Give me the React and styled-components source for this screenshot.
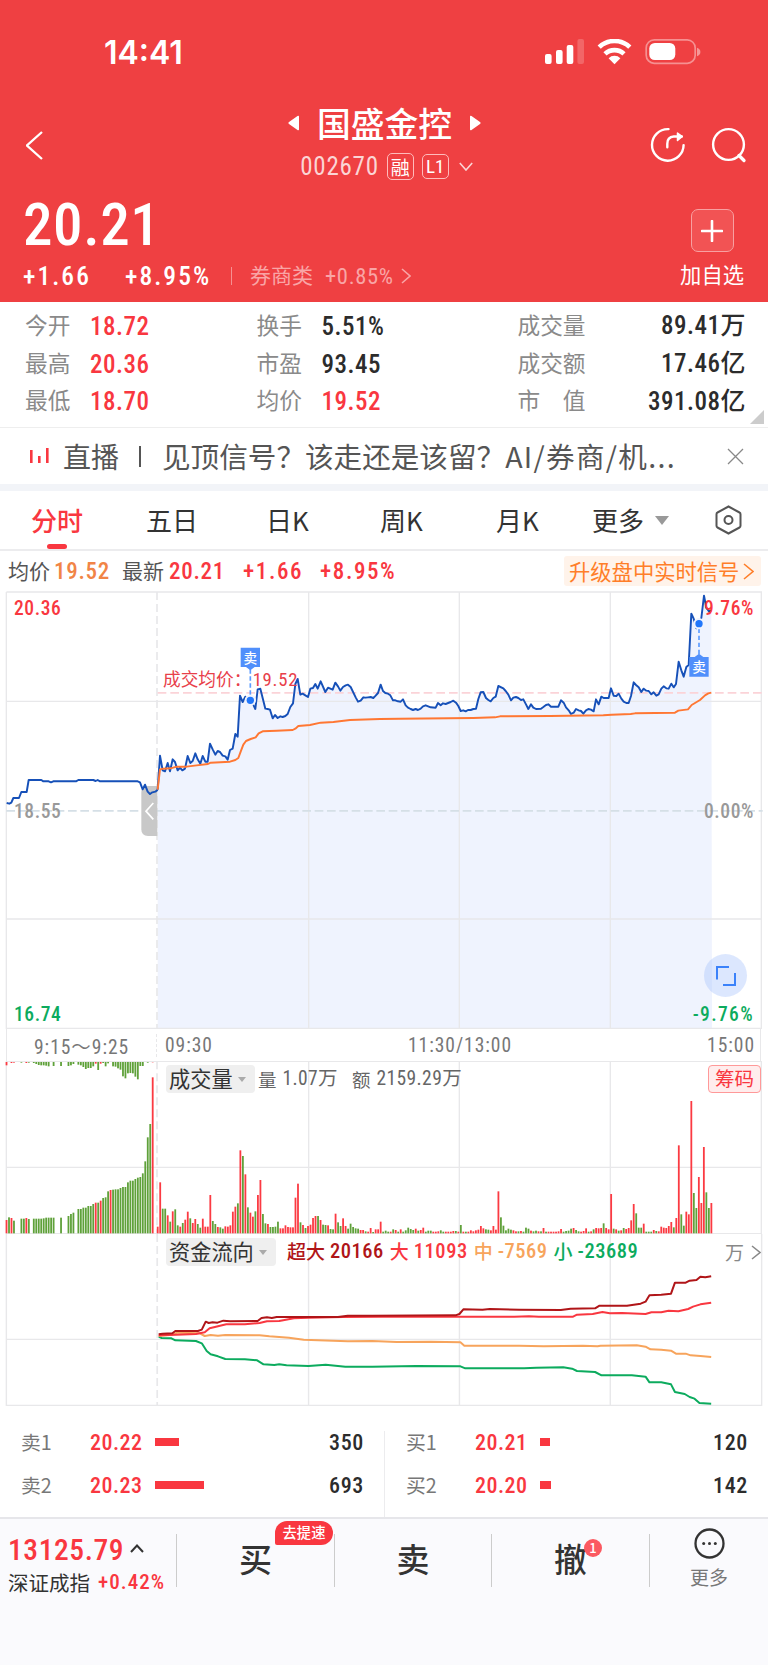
import styled, { createGlobalStyle } from "styled-components";

const GlobalStyle = createGlobalStyle`
  * {
    box-sizing: border-box;
  }

  body {
    margin: 0;
    background: #fff;
    color: #333;
    font-family: "Noto Sans CJK SC", sans-serif;
  }
`;

const RED = "#f93740";
const GREEN = "#0cab5e";
const ORANGE = "#f18446";

const STATS = [
  [
    { label: "今开", value: "18.72", up: true },
    { label: "最高", value: "20.36", up: true },
    { label: "最低", value: "18.70", up: true },
  ],
  [
    { label: "换手", value: "5.51%" },
    { label: "市盈", value: "93.45" },
    { label: "均价", value: "19.52", up: true },
  ],
  [
    { label: "成交量", value: "89.41万" },
    { label: "成交额", value: "17.46亿" },
    { label: "市　值", value: "391.08亿" },
  ],
];

const TABS = [
  { name: "分时", left: 31, width: 52, active: true },
  { name: "五日", left: 63, width: 52 },
  { name: "日K", left: 68, width: 44 },
  { name: "周K", left: 70, width: 44 },
  { name: "月K", left: 72, width: 44 },
];

const ASKS = [
  { label: "卖1", price: "20.22", bar: 24, amount: 350 },
  { label: "卖2", price: "20.23", bar: 49, amount: 693 },
];

const BIDS = [
  { label: "买1", price: "20.21", bar: 10, amount: 120 },
  { label: "买2", price: "20.20", bar: 11, amount: 142 },
];

// price pane, three units to a pixel
const AUCTION_LINE =
  "20,669 28,671 34,668 40,654 57,654 64,636 80,636 86,600 124,600 130,604 146,604 153,607 160,604 228,604 235,600 280,600 287,603 293,600 300,604 413,604 420,607 428,628 435,614 443,635 450,642 457,637 466,635 473,629";

const PRICE_LINE =
  "473,629 480,527 488,571 495,574 503,549 510,574 518,538 525,546 533,571 540,563 547,571 555,566 563,528 571,549 578,543 586,520 593,538 601,551 608,528 616,545 623,545 630,491 638,508 646,524 653,513 660,516 668,527 676,529 683,539 690,510 698,506 706,462 713,470 720,347 728,366 736,350 743,356 750,361 758,370 766,387 773,328 781,326 796,386 803,387 810,389 818,415 825,405 833,414 841,409 848,411 856,408 863,402 871,381 879,370 886,312 893,297 901,344 908,341 916,346 924,351 931,326 939,324 946,312 953,326 962,304 976,336 984,323 991,326 998,329 1006,308 1014,319 1021,332 1029,321 1037,316 1044,314 1052,321 1067,352 1074,365 1082,362 1090,352 1097,353 1104,352 1112,351 1120,354 1127,347 1134,339 1142,314 1149,333 1156,339 1164,341 1171,346 1179,361 1186,361 1194,364 1202,365 1209,358 1217,376 1224,383 1232,387 1239,390 1247,387 1254,390 1262,386 1269,379 1277,376 1292,382 1307,383 1314,369 1322,376 1329,370 1337,372 1352,366 1360,362 1368,368 1375,378 1382,393 1390,391 1397,394 1404,390 1412,390 1420,387 1428,386 1435,357 1442,337 1450,336 1458,354 1465,360 1472,364 1480,354 1487,350 1495,318 1510,325 1517,333 1525,344 1533,361 1540,353 1548,351 1555,354 1563,360 1570,358 1578,373 1585,387 1593,373 1600,383 1608,387 1623,386 1630,381 1638,375 1645,373 1653,380 1675,380 1683,361 1691,368 1698,382 1706,391 1713,402 1721,398 1728,387 1736,391 1743,393 1750,401 1758,391 1765,387 1773,389 1781,394 1788,358 1796,373 1804,350 1811,354 1826,354 1833,325 1841,347 1849,348 1856,341 1864,356 1871,365 1879,369 1886,369 1893,348 1901,307 1908,315 1916,322 1924,336 1931,326 1939,332 1946,333 1954,343 1961,337 1969,347 1976,343 1984,326 1991,319 1999,325 2006,326 2014,311 2021,322 2028,312 2036,245 2044,271 2051,290 2059,261 2066,255 2074,101 2081,116 2089,145 2097,131 2104,114 2112,47 2119,83 2127,94 2134,92";

const AVERAGE_LINE =
  "473,629 480,568 490,566 512,565 530,560 560,560 590,556 624,552 632,548 690,545 706,540 715,534 722,515 730,494 738,483 752,477 767,472 776,460 788,454 830,452 878,450 886,446 895,438 930,435 962,428 1000,426 1050,420 1140,417 1200,416 1420,414 1485,412 1500,409 1650,408 1810,406 1835,404 1892,402 1905,400 2025,398 2035,392 2064,388 2075,375 2100,360 2115,346 2125,340 2134,338";

// bar heights: positive is a red bar, negative a green one, 0 leaves a gap
const AUCTION_MATCHED = [
  40, -48, 46, -38, 0, 0, -44, -44, 46, -43, 0, -44, -44, -44, -44, -45, -47,
  -47, -47, -47, 0, 0, -47, 0, 0, -52, -58, -62, 0, -73, -73, -77, -77, -82,
  -82, -88, 92, -92, 98, -106, -108, -126, 130, -131, -132, -132, -136, -139,
  -139, -153, -158, -158, -163, -167, -169, -180, -216, -288, -328, 468,
];

const AUCTION_UNMATCHED = [
  10, 0, 3, 2, 0, 0, -2, 0, 3, -2, 0, -3, -6, -9, -10, -10, -11, -13, 0, -12, 0,
  0, -12, 0, 0, -12, -10, -6, 0, -8, -10, -15, -21, -18, -18, -13, 5, -24, 5,
  -3, -13, -4, 0, -13, -14, -19, -23, -43, -49, -34, -33, -34, -44, -52, -12,
  -12, 0, -2, 0, 1,
];

const VOLUME = [
  20, 153, -74, -74, 54, -35, 66, -72, -24, 20, -31, 41, 65, -45, 31, 43, -28,
  -17, 44, 20, 20, 115, -37, -28, 19, -18, -14, 21, 20, 24, 65, 80, -90, 249,
  -232, 177, -78, 62, 50, -66, 115, 160, -58, -30, 28, -19, -19, -20, -35, 15,
  15, 24, 19, 18, 18, 107, 149, -33, 25, -16, 22, 26, 46, 52, -52, 40, -26,
  -25, 24, -13, -12, 59, -33, -22, 45, 22, -14, -29, -19, -15, -14, 10, 10, -6,
  5, 16, -4, 12, 12, 35, -5, -8, -5, 5, -12, 10, -5, 12, -5, -9, -17, -13, -10,
  14, -8, 10, 17, -5, -8, -8, 5, 5, 6, -9, -5, 5, 5, 5, 7, -7, 5, -25, 5, -5,
  5, 9, 6, 9, 11, 22, 15, -12, -11, 9, 22, 11, 126, -48, -23, -9, -14, -11, 9,
  6, -6, 7, -5, -17, -14, 8, -6, -8, 6, -6, 16, -5, 5, 5, 5, 5, 6, 13, -5, -7,
  -8, -14, 16, -10, -6, 5, 7, 15, -5, 6, -12, 16, 15, 16, -30, 16, 12, 118,
  -14, 12, -8, 9, -16, 13, 16, 39, 88, -60, -17, -17, 29, -5, -5, -5, 10, -7,
  6, 20, 17, 16, 22, 34, -18, 46, 264, -57, -23, 65, 57, 397, -121, -76, 169,
  91, 259, -123, -76, 91,
];

const FLOWS = [
  {
    name: "小",
    value: "-23689",
    color: GREEN,
    points:
      "324,320 330,324 350,325 358,331 400,333 412,340 422,363 430,373 445,379 460,387 500,388 525,391 538,403 560,405 570,403 585,406 630,408 665,404 705,410 760,410 850,408 940,409 950,415 1070,415 1095,413 1150,412 1168,416 1178,423 1215,426 1228,436 1290,436 1318,440 1326,457 1350,457 1370,463 1378,486 1398,492 1408,501 1418,506 1428,519 1452,521",
  },
  {
    name: "中",
    value: "-7569",
    color: "#f7a45c",
    points:
      "324,318 352,314 362,308 408,310 418,318 430,315 445,317 460,315 530,316 550,319 590,323 605,326 620,329 680,332 710,334 760,333 810,336 880,335 940,337 948,347 1060,347 1110,349 1190,347 1220,349 1226,347 1300,346 1318,350 1328,358 1350,359 1370,362 1380,371 1400,371 1410,376 1430,378 1452,381",
  },
  {
    name: "大",
    value: "11093",
    color: RED,
    points:
      "324,316 360,314 400,312 418,307 428,295 445,289 462,283 500,283 530,279 545,274 570,273 600,265 630,263 700,261 780,260 930,260 1050,260 1080,259 1100,260 1170,260 1178,254 1210,252 1230,246 1245,250 1270,249 1318,252 1330,247 1350,247 1365,242 1385,244 1405,237 1415,230 1430,223 1452,218",
  },
  {
    name: "超大",
    value: "20166",
    color: "#b01518",
    points:
      "324,313 332,311 352,310 358,303 404,303 412,299 420,275 426,279 434,277 444,278 456,272 470,274 526,273 534,264 545,262 555,264 565,261 620,261 690,261 710,257 760,257 930,256 938,252 946,238 985,239 1000,237 1060,239 1145,240 1165,236 1215,235 1224,227 1280,227 1308,221 1318,215 1326,196 1350,194 1370,191 1378,158 1400,158 1408,152 1422,150 1430,140 1440,142 1452,139",
  },
];

const Chevron = ({ width = 9, height = 15, flip, stroke = 1.6 }) => (
  <Icon width={width} height={height} viewBox={`0 0 ${width} ${height}`}>
    <path
      d={
        flip
          ? `M${width - 1} 1L1 ${height / 2}L${width - 1} ${height - 1}`
          : `M1 1L${width - 1} ${height / 2}L1 ${height - 1}`
      }
      strokeWidth={stroke}
    />
  </Icon>
);

const Bars = ({ values, from, to, base, down }) => {
  const step = (to - from) / (values.length - 1);
  return values.map((value, i) => {
    const height = Math.abs(value);
    if (!height) return null;
    return (
      <rect
        key={i}
        x={from + i * step - 2.6}
        y={down ? base : base - height}
        width="5.4"
        height={height}
        fill={value > 0 ? "#fb3a42" : "#5fa13a"}
      />
    );
  });
};

const Header = () => (
  <HeaderContainer>
    <StatusBar>
      <Clock>14:41</Clock>
      <svg width="157" height="26" viewBox="0 0 157 26">
        <g fill="#fff">
          <rect x="0" y="15" width="6.6" height="10" rx="2" />
          <rect x="11" y="11" width="6.6" height="14" rx="2" />
          <rect x="21.7" y="6" width="6.6" height="19" rx="2" />
          <rect x="32.4" y="0" width="6.6" height="25" rx="2" opacity=".2" />
          <path d="M69.5 25.2L63.6 19.2a8.6 8.6 0 0 1 11.8 0z" />
          <rect x="104.3" y="4" width="26" height="17" rx="5.5" />
          <path d="M152 8.7v8.6q3.4-1.2 3.4-4.3T152 8.7z" opacity=".45" />
        </g>
        <g fill="none" stroke="#fff" strokeWidth="4.6">
          <path d="M54.2 8.2a22 22 0 0 1 30.6 0" />
          <path d="M60 14.9a13.8 13.8 0 0 1 19 0" />
        </g>
        <rect x="101.2" y=".9" width="49" height="23.4" rx="8" fill="none" stroke="#fff" strokeWidth="1.7" opacity=".42" />
      </svg>
    </StatusBar>

    <TitleBar>
      <Chevron width={17} height={29} stroke={2.3} flip />
      <StockTitle>
        <StockName>
          <svg width="12" height="16" viewBox="0 0 12 16">
            <path d="M11 1.5v13a.9.9 0 0 1-1.5.5L1 9a1.3 1.3 0 0 1 0-2L9.5 1A.9.9 0 0 1 11 1.5z" fill="#fff" />
          </svg>
          国盛金控
          <svg width="12" height="16" viewBox="0 0 12 16">
            <path d="M1 1.5v13a.9.9 0 0 0 1.5.5L11 9a1.3 1.3 0 0 0 0-2L2.5 1A.9.9 0 0 0 1 1.5z" fill="#fff" />
          </svg>
        </StockName>
        <StockCode>
          <span>002670</span>
          <Tag>融</Tag>
          <Tag $latin>L1</Tag>
          <Icon width="14" height="9" viewBox="0 0 14 9">
            <path d="M.8 1L7 8l6.2-7" strokeWidth="1.6" />
          </Icon>
        </StockCode>
      </StockTitle>
      <TitleActions>
        <Icon width="36" height="36" viewBox="0 0 36 36">
          <g strokeWidth="2.4" strokeLinecap="round" strokeLinejoin="round">
            <path d="M18.5 2.1H18a15.8 15.8 0 1 0 15.6 16" />
            <path d="M17.3 20.2v-3.5q0-6.7 6.500-7.200h8" />
            <path d="M27.500 6l4.800 3.500-4.800 4z" fill="#fff" strokeWidth="1.5" />
          </g>
        </Icon>
        <Icon width="36" height="36" viewBox="0 0 36 36">
          <circle cx="17.5" cy="17.5" r="15.4" strokeWidth="2.4" />
          <path d="M28 28.5l5 5" strokeWidth="3.3" strokeLinecap="round" />
        </Icon>
      </TitleActions>
    </TitleBar>

    <Quote>
      <div>
        <LastPrice>20.21</LastPrice>
        <QuoteLine>
          <Change>+1.66</Change>
          <Change>+8.95%</Change>
          <Sector>
            <SectorName>券商类</SectorName>
            <SectorChange>+0.85%</SectorChange>
            <Chevron width={10} height={16} />
          </Sector>
        </QuoteLine>
      </div>
      <AddWatch>
        <AddButton>
          <Icon width="22" height="22" viewBox="0 0 22 22">
            <path d="M11 1v20M1 11h20" strokeWidth="2.6" strokeLinecap="round" />
          </Icon>
        </AddButton>
        加自选
      </AddWatch>
    </Quote>
  </HeaderContainer>
);

const Book = ({ rows }) => (
  <BookSide>
    {rows.map((row) => (
      <BookRow key={row.label}>
        <BookLabel>{row.label}</BookLabel>
        <BookPrice>{row.price}</BookPrice>
        <BookBar style={{ width: row.bar }} />
        <BookAmount>{row.amount}</BookAmount>
      </BookRow>
    ))}
  </BookSide>
);

const PricePane = () => (
  <Pane $height={438}>
    <svg width="768" height="438" viewBox="0 33 2304 1314">
      <path d={`M${PRICE_LINE} L2136,1345 L473,1345Z`} fill="#eff3fe" />
      <g fill="none" stroke="#e8e8ea" strokeWidth="4">
        <path d="M19 36H2284V1347M19 36V1347M19 364H2284M19 1017H2284M19 1345H2284M926 36V1347M1378 36V1347M1831 36V1347" />
        <path d="M471 36V1347" strokeWidth="5" strokeDasharray="24 12" />
      </g>
      <path d="M473 338.5H2288" stroke="#fbd3d8" strokeWidth="5" strokeDasharray="26 12" />
      <path d="M19 692.5H2288" stroke="#d5dfe6" strokeWidth="5" strokeDasharray="26 11" />
      <path d="M472 618H444q-20 0-20 20V748q0 20 20 20H472z" fill="#c8c8c8" />
      <path d="M460 669L438 693.5L460 718" fill="none" stroke="#fff" strokeWidth="5" />
      <g fill="none" strokeLinejoin="round">
        <polyline points={AUCTION_LINE} stroke="#1650b8" strokeWidth="5.8" />
        <polyline points={PRICE_LINE} stroke="#1650b8" strokeWidth="5.8" />
        <polyline points={AVERAGE_LINE} stroke="#ff7733" strokeWidth="5.8" />
      </g>
      <g fill="#2177fb" stroke="#5c9cff" strokeWidth="5">
        <path d="M751 268V352M2097 146V228" strokeDasharray="13 8" />
        <circle cx="751" cy="361" r="13" stroke="#eff3fe" strokeWidth="8" />
        <circle cx="2097" cy="131" r="13" stroke="#eff3fe" strokeWidth="8" />
        <circle cx="751" cy="361" r="11" stroke="none" />
        <circle cx="2097" cy="131" r="11" stroke="none" />
      </g>
      <g fill="#508ffb">
        <path d="M722 203H780V261H764L751 271L738 261H722z" />
        <path d="M2068 231H2084L2097 221L2110 231H2126V290H2068z" />
      </g>
      <g fill="#fff" fontSize="41" fontWeight="500" textAnchor="middle">
        <text x="751" y="249">卖</text>
        <text x="2097" y="277">卖</text>
      </g>
      <text x="489" y="319" fontSize="53" fill="#e8404a">成交均价：</text>
      <text x="758" y="318" fontSize="56" letterSpacing="2.2" fill="#e8404a" fontFamily="Roboto Condensed">19.52</text>
    </svg>
    <AxisLabel $top={6} $color={RED}>20.36</AxisLabel>
    <AxisLabel $top={6} $color={RED} $right>9.76%</AxisLabel>
    <AxisLabel $top={209} $color="#999">18.55</AxisLabel>
    <AxisLabel $top={209} $color="#999" $right>0.00%</AxisLabel>
    <AxisLabel $top={412} $color={GREEN}>16.74</AxisLabel>
    <AxisLabel $top={412} $color={GREEN} $right $wide>-9.76%</AxisLabel>
    <ExpandButton>
      <svg width="20" height="20" viewBox="0 0 20 20" fill="none" stroke="#3b82fa" strokeWidth="2">
        <path d="M1 13.5V1H13M7 19H19V7" />
      </svg>
    </ExpandButton>
  </Pane>
);

const VolumePane = () => (
  <Pane $height={173}>
    <svg width="768" height="173" viewBox="0 153 2304 519">
      <g fill="none" stroke="#e8e8ea" strokeWidth="4">
        <path d="M19 154H2284V672M19 154V672M19 472H2284M926 154V672M1378 154V672M1831 154V672M19 671H2284" />
        <path d="M471 154V672" strokeWidth="5" strokeDasharray="24 12" />
      </g>
      <Bars values={AUCTION_MATCHED} from={19.5} to={458} base={670} />
      <Bars values={AUCTION_UNMATCHED} from={19.5} to={458} base={156} down />
      <Bars values={VOLUME} from={473} to={2134} base={670} />
    </svg>
    <Legend>
      <Picker $width={89}>
        <span>成交量</span>
        <Caret />
      </Picker>
      <LegendText>量</LegendText>
      <LegendNumber>1.07万</LegendNumber>
      <LegendText $gap={14}>额</LegendText>
      <LegendNumber>2159.29万</LegendNumber>
      <ChipsButton>筹码</ChipsButton>
    </Legend>
  </Pane>
);

const FlowPane = () => (
  <Pane $height={173}>
    <svg width="768" height="173" viewBox="0 12 1568 519" preserveAspectRatio="none">
      <g fill="none" stroke="#e8e8ea" strokeWidth="1.4">
        <path vectorEffect="non-scaling-stroke" d="M13 12V526H1555V12M13 328H1555M630 12V526M938 12V526M1246 12V526" />
        <path vectorEffect="non-scaling-stroke" d="M321 12V526" strokeWidth="1.7" strokeDasharray="8 4" />
      </g>
      {FLOWS.map((flow) => (
        <polyline
          key={flow.name}
          points={flow.points}
          fill="none"
          stroke={flow.color}
          strokeWidth="2"
          strokeLinejoin="round"
          vectorEffect="non-scaling-stroke"
        />
      ))}
    </svg>
    <Legend>
      <Picker $width={110}>
        <span>资金流向</span>
        <Caret />
      </Picker>
      <FlowItems>
        {[...FLOWS].reverse().map((flow) => (
          <FlowItem key={flow.name} $color={flow.color}>
            {flow.name}
            <FlowValue>{flow.value}</FlowValue>
          </FlowItem>
        ))}
      </FlowItems>
      <UnitLink>
        万
        <Chevron width={10} height={15} stroke={1.5} />
      </UnitLink>
    </Legend>
  </Pane>
);

const App = () => {
  return (
    <Screen>
      <GlobalStyle />
      <Header />

      <Stats>
        {STATS.map((column, i) => (
          <StatColumn key={i}>
            {column.map((stat) => (
              <Stat key={stat.label}>
                <StatLabel>{stat.label}</StatLabel>
                <StatValue $up={stat.up}>{stat.value}</StatValue>
              </Stat>
            ))}
          </StatColumn>
        ))}
        <Corner />
      </Stats>

      <LiveBanner>
        <svg width="20" height="16" viewBox="0 0 20 16" fill={RED}>
          <rect x="0" y="2" width="2.6" height="13" />
          <rect x="8" y="8" width="2.6" height="7" />
          <rect x="16" y="0" width="2.6" height="15" />
        </svg>
        <LiveTitle>直播</LiveTitle>
        <LiveBar />
        <LiveText>
          见顶信号？该走还是该留？<Tags>AI/券商/机...</Tags>
        </LiveText>
        <Icon width="17" height="17" viewBox="0 0 17 17">
          <path d="M1 1l15 15M16 1L1 16" strokeWidth="1.3" stroke="#888" />
        </Icon>
      </LiveBanner>

      <Tabs>
        {TABS.map((tab) => (
          <Tab key={tab.name} $left={tab.left} $width={tab.width} $active={tab.active}>
            {tab.name}
          </Tab>
        ))}
        <Tab $left={52} $width={52}>
          更多
        </Tab>
        <MoreCaret />
        <Settings width="27" height="30" viewBox="0 0 27 30">
          <path d="M13.5 1.5L24.5 7.5Q25.5 8 25.5 9.2V20.8Q25.5 22 24.5 22.5L13.5 28.5L2.5 22.5Q1.5 22 1.5 20.8V9.2Q1.5 8 2.5 7.5Z" />
          <circle cx="13.5" cy="15" r="4" />
        </Settings>
      </Tabs>

      <InfoBar>
        <InfoText>均价</InfoText>
        <InfoNumber $left={4} $width={68} $color={ORANGE}>
          19.52
        </InfoNumber>
        <InfoText>最新</InfoText>
        <InfoNumber $left={5} $width={74}>
          20.21
        </InfoNumber>
        <InfoNumber $width={77} $wide>
          +1.66
        </InfoNumber>
        <InfoNumber $wide>+8.95%</InfoNumber>
        <UpgradeLink>
          升级盘中实时信号
          <Chevron width={11} height={17} />
        </UpgradeLink>
      </InfoBar>

      <PricePane />
      <TimeAxis>
        <AuctionTime>9:15～9:25</AuctionTime>
        <TradeTimes>
          <span>09:30</span>
          <span>11:30/13:00</span>
          <span>15:00</span>
        </TradeTimes>
      </TimeAxis>
      <VolumePane />
      <FlowPane />

      <OrderBook>
        <Book rows={ASKS} />
        <Book rows={BIDS} />
      </OrderBook>

      <BottomBar>
        <IndexBox>
          <IndexPrice>
            13125.79
            <Icon width="14" height="9" viewBox="0 0 14 9">
              <path d="M1 8l6-6.5L13 8" strokeWidth="2" stroke="#333" />
            </Icon>
          </IndexPrice>
          <IndexName>
            深证成指
            <IndexChange>+0.42%</IndexChange>
          </IndexName>
        </IndexBox>
        <Action $width={158}>
          买<SpeedBadge>去提速</SpeedBadge>
        </Action>
        <Action $width={157}>卖</Action>
        <Action $width={158}>
          撤<CountBadge>1</CountBadge>
        </Action>
        <MoreButton>
          <svg width="31" height="31" viewBox="0 0 31 31" fill="#333">
            <circle cx="15.5" cy="15.5" r="14" fill="none" stroke="#333" strokeWidth="2.3" />
            <circle cx="9.7" cy="15.5" r="1.5" />
            <circle cx="15.5" cy="15.5" r="1.5" />
            <circle cx="21.3" cy="15.5" r="1.5" />
          </svg>
          更多
        </MoreButton>
      </BottomBar>
    </Screen>
  );
};

export default App;

const Screen = styled.div`
  width: 768px;
  height: 1665px;
  display: flex;
  flex-direction: column;
  overflow: hidden;
  white-space: nowrap;
`;

const Icon = styled.svg`
  fill: none;
  stroke: currentColor;
  flex-shrink: 0;
`;

const Num = styled.span`
  font-family: "Roboto Condensed", "Noto Sans CJK SC", sans-serif;
  font-weight: 500;
  letter-spacing: 0.03em;
`;

const HeaderContainer = styled.header`
  height: 302px;
  flex-shrink: 0;
  background: #ef4042;
  color: #fff;
`;

const StatusBar = styled.div`
  height: 98px;
  padding: 39px 66px 0 104px;
  display: flex;
  justify-content: space-between;
  align-items: flex-start;
`;

const Clock = styled.div`
  font: 600 32px/28px Inter, sans-serif;
`;

const TitleBar = styled.div`
  height: 97px;
  padding: 0 21px 3px 26px;
  display: grid;
  grid-template-columns: 1fr auto 1fr;
  align-items: center;
`;

const StockTitle = styled.div`
  margin-top: -8px;
  display: flex;
  flex-direction: column;
  align-items: center;
`;

const StockName = styled.div`
  margin-left: -4px;
  display: flex;
  align-items: center;
  gap: 17px;
  font-size: 33.8px;
  font-weight: 500;
  line-height: 44px;
`;

const StockCode = styled(Num).attrs({ as: "div" })`
  margin-top: 6px;
  height: 30px;
  display: flex;
  align-items: center;
  font-size: 25px;
  font-weight: 400;
  color: #fbd5d5;

  svg {
    margin-left: 10px;
  }
`;

const Tag = styled.span`
  width: 27px;
  height: ${(p) => (p.$latin ? 25 : 27)}px;
  margin-left: ${(p) => (p.$latin ? 8 : 8)}px;
  border: 1.3px solid #fbb;
  border-radius: 5px;
  display: flex;
  align-items: center;
  justify-content: center;
  font-size: 19px;
  letter-spacing: 0;
  color: #fff;
`;

const TitleActions = styled.div`
  display: flex;
  justify-content: flex-end;
  gap: 25px;
`;

const Quote = styled.div`
  padding: 0 24px 0 23px;
  display: flex;
  justify-content: space-between;
`;

const LastPrice = styled(Num).attrs({ as: "div" })`
  font-size: 59px;
  line-height: 59px;
  letter-spacing: 0.01em;
`;

const QuoteLine = styled.div`
  margin-top: 7px;
  height: 30px;
  display: flex;
  align-items: center;
`;

const Change = styled(Num)`
  width: 102px;
  font-size: 25.5px;
  letter-spacing: 0.08em;
`;

const Sector = styled.div`
  margin-left: 4px;
  padding-left: 18px;
  display: flex;
  align-items: center;
  font-size: 21px;
  line-height: 18px;
  color: #f9a5a6;
  border-left: 1.5px solid #f69091;
`;

const SectorName = styled.span`
  margin-top: -4px;
`;

const SectorChange = styled(Num)`
  margin: 0 7px 0 12px;
  font-size: 22.5px;
  font-weight: 400;
`;

const AddWatch = styled.div`
  padding-top: 14px;
  display: flex;
  flex-direction: column;
  align-items: center;
  font-size: 21.3px;
  line-height: 43px;
`;

const AddButton = styled.div`
  width: 43px;
  height: 43px;
  border: 1px solid #f8a0a1;
  border-radius: 7px;
  background: #f25354;
  display: flex;
  align-items: center;
  justify-content: center;
`;

const Stats = styled.section`
  position: relative;
  height: 126px;
  flex-shrink: 0;
  padding: 6px 22px 0 25px;
  display: grid;
  grid-template-columns: 231.5px 261px 228.5px;
  border-bottom: 1.5px solid #eee;
`;

const StatColumn = styled.div``;

const Stat = styled.div`
  height: 37.7px;
  display: flex;
  align-items: center;
`;

const StatLabel = styled.span`
  width: 65px;
  font-size: 22.7px;
  line-height: 34px;
  margin-top: -4px;
  color: #8a8a8a;
`;

const StatValue = styled(Num)`
  font-size: 25px;
  letter-spacing: 0.02em;
  line-height: 34px;
  color: ${(p) => (p.$up ? RED : "#2c2c2c")};

  ${StatColumn}:nth-child(3) & {
    margin: -1px 0 0 auto;
  }
`;

const Corner = styled.i`
  position: absolute;
  right: 4px;
  bottom: 3px;
  border-style: solid;
  border-width: 0 0 14px 14px;
  border-color: transparent transparent #ccc transparent;
`;

const LiveBanner = styled.section`
  height: 63px;
  flex-shrink: 0;
  padding: 0 24px 0 30px;
  display: flex;
  align-items: center;
  font-size: 28px;
  line-height: 40px;
  color: #555;
  border-bottom: 7px solid #f2f4f8;
`;

const LiveTitle = styled.span`
  margin-left: 13px;
  width: 76px;
`;

const LiveBar = styled.i`
  width: 2px;
  height: 21px;
  background: #555;
`;

const LiveText = styled.span`
  flex: 1;
  margin-left: 21px;
  font-size: 28.6px;
`;

const Tags = styled.span`
  letter-spacing: 1.3px;
`;

const Tabs = styled.nav`
  height: 60px;
  flex-shrink: 0;
  display: flex;
  align-items: center;
  border-bottom: 2px solid #ececee;
`;

const Tab = styled.div`
  position: relative;
  width: ${(p) => p.$width}px;
  margin-left: ${(p) => p.$left}px;
  font-size: 26px;
  line-height: 58px;
  font-weight: ${(p) => (p.$active ? 500 : 400)};
  color: ${(p) => (p.$active ? RED : "#333")};

  &::after {
    content: "";
    position: absolute;
    left: 16px;
    bottom: 0;
    width: 20px;
    height: ${(p) => (p.$active ? 5 : 0)}px;
    border-radius: 3px;
    background: ${RED};
  }
`;

const Caret = styled.i`
  margin-left: 5px;
  border-style: solid;
  border-width: 5px 4.5px 0;
  border-color: #aaa transparent;
`;

const MoreCaret = styled(Caret)`
  margin-left: 11px;
  border-width: 9px 7px 0;
  border-color: #999 transparent;
`;

const Settings = styled(Icon)`
  margin-left: 46px;
  stroke: #555;
  stroke-width: 2px;
`;

const InfoBar = styled.section`
  height: 40px;
  flex-shrink: 0;
  padding: 0 7px 0 8px;
  display: flex;
  align-items: center;
`;

const InfoText = styled.span`
  font-size: 21px;
  line-height: 30px;
  margin-top: -2px;
  color: #555;
`;

const InfoNumber = styled(Num)`
  width: ${(p) => (p.$width ? `${p.$width}px` : "auto")};
  margin-left: ${(p) => p.$left || 0}px;
  font-size: 23px;
  letter-spacing: ${(p) => (p.$wide ? 0.07 : 0.03)}em;
  color: ${(p) => p.$color || RED};
`;

const UpgradeLink = styled.div`
  width: 197px;
  height: 30px;
  margin-left: auto;
  padding-left: 5px;
  display: flex;
  align-items: center;
  gap: 4px;
  border-radius: 3px;
  background: #fff3ea;
  color: #ff7e29;
  font-size: 21.3px;
  line-height: 26px;
`;

const Pane = styled.section`
  position: relative;
  height: ${(p) => p.$height}px;
  flex-shrink: 0;

  > svg {
    display: block;
  }
`;

const AxisLabel = styled(Num)`
  position: absolute;
  top: ${(p) => p.$top}px;
  ${(p) => (p.$right ? "right" : "left")}: 14px;
  font-size: 19.5px;
  line-height: 24px;
  letter-spacing: ${(p) => (p.$wide ? 0.07 : 0.03)}em;
  color: ${(p) => p.$color};
`;

const ExpandButton = styled.div`
  position: absolute;
  right: 21px;
  bottom: 32px;
  width: 43px;
  height: 43px;
  border-radius: 50%;
  background: rgba(168, 196, 252, 0.4);
  display: flex;
  align-items: center;
  justify-content: center;
`;

const TimeAxis = styled(Num).attrs({ as: "div" })`
  height: 32px;
  flex-shrink: 0;
  margin: 0 7px 0 6px;
  display: flex;
  align-items: center;
  border: 0 solid #e8e8ea;
  border-width: 0 1.5px;
  font-size: 19.5px;
  font-weight: 400;
  letter-spacing: 0.05em;
  color: #777;
`;

const AuctionTime = styled.div`
  width: 149px;
  padding-left: 27px;
`;

const TradeTimes = styled.div`
  flex: 1;
  padding: 0 5px 0 8px;
  display: flex;
  justify-content: space-between;
  border-left: 1.7px dashed #e8e8ea;
`;

const Legend = styled.div`
  position: absolute;
  inset: 4px 7px auto 166px;
  height: 28px;
  display: flex;
  align-items: center;
  line-height: 26px;
`;

const Picker = styled.div`
  width: ${(p) => p.$width}px;
  height: 28px;
  padding-left: 3px;
  display: flex;
  align-items: center;
  border-radius: 4px;
  background: #efefef;
  font-size: 21.2px;

  span {
    margin-top: -3px;
  }
`;

const LegendText = styled.span`
  margin-left: ${(p) => p.$gap || 3}px;
  font-size: 18.5px;
  color: #666;
`;

const LegendNumber = styled(Num)`
  margin-left: 6px;
  font-size: 19.5px;
  letter-spacing: 0.02em;
  color: #666;
  font-weight: 400;
`;

const ChipsButton = styled.div`
  width: 53px;
  height: 28px;
  margin-left: auto;
  border: 1.5px solid #f99;
  border-radius: 4px;
  background: #ffeded;
  color: ${RED};
  font-size: 19.5px;
  line-height: 24px;
  text-align: center;
`;

const FlowItems = styled.div`
  display: flex;
  gap: 6px;
  margin-left: 11px;
  margin-top: -2px;
`;

const FlowItem = styled.div`
  display: flex;
  align-items: center;
  gap: 5px;
  font-size: 19px;
  font-weight: 500;
  color: ${(p) => p.$color};
`;

const FlowValue = styled(Num)`
  font-size: 20.5px;
  letter-spacing: 0.025em;
`;

const UnitLink = styled.div`
  margin-left: auto;
  display: flex;
  align-items: center;
  gap: 7px;
  font-size: 19px;
  color: #888;
`;

const OrderBook = styled.section`
  height: 110px;
  flex-shrink: 0;
  padding-top: 24px;
  display: grid;
  grid-template-columns: 1fr 1fr;
`;

const BookSide = styled.div`
  padding: 0 20px 0 21px;

  & + & {
    border-left: 1px solid #ececee;
  }
`;

const BookRow = styled.div`
  height: 43px;
  margin-top: -10px;
  display: flex;
  align-items: center;

  & + & {
    margin-top: 0;
  }
`;

const BookLabel = styled.span`
  width: 69px;
  margin-top: -2px;
  font-size: 19.8px;
  line-height: 28px;
  color: #777;
`;

const BookPrice = styled(Num)`
  width: 65px;
  font-size: 22px;
  letter-spacing: 0.02em;
  color: ${RED};
`;

const BookBar = styled.i`
  height: 8px;
  margin-top: -2px;
  background: ${RED};
`;

const BookAmount = styled(Num)`
  margin-left: auto;
  font-size: 22px;
  color: #2c2c2c;
`;

const BottomBar = styled.footer`
  flex: 1;
  display: flex;
  align-items: flex-start;
  border-top: 2px solid #e6e6ea;
  background: #fafafd;
`;

const IndexBox = styled.div`
  width: 176px;
  padding: 16px 0 0 8px;
`;

const IndexPrice = styled(Num).attrs({ as: "div" })`
  height: 30px;
  display: flex;
  align-items: center;
  gap: 6px;
  font-size: 29.5px;
  letter-spacing: 0.02em;
  color: ${RED};

  svg {
    margin-top: -3px;
  }
`;

const IndexName = styled.div`
  margin-top: 2px;
  display: flex;
  align-items: center;
  gap: 8px;
  font-size: 20.5px;
  line-height: 30px;
`;

const IndexChange = styled(Num)`
  font-size: 21px;
  letter-spacing: 0.05em;
  color: ${RED};
`;

const Action = styled.div`
  position: relative;
  width: ${(p) => p.$width}px;
  height: 53px;
  margin-top: 15px;
  border-left: 1.5px solid #ccc;
  text-align: center;
  font-size: 33px;
  line-height: 48px;
  font-weight: 500;
`;

const SpeedBadge = styled.span`
  position: absolute;
  left: 98px;
  top: -13px;
  width: 58px;
  height: 24px;
  border-radius: 12px 12px 12px 2px;
  background: ${RED};
  color: #fff;
  font-size: 14.3px;
  line-height: 22px;
`;

const CountBadge = styled.span`
  position: absolute;
  left: 92px;
  top: 5px;
  width: 18px;
  height: 18px;
  border-radius: 50%;
  background: #fb5961;
  color: #fff;
  font-size: 13px;
  line-height: 18px;
`;

const MoreButton = styled.div`
  flex: 1;
  height: 53px;
  margin-top: 15px;
  border-left: 1.5px solid #ccc;
  display: flex;
  flex-direction: column;
  align-items: center;
  gap: 4px;
  font-size: 19px;
  line-height: 28px;
  color: #777;

  svg {
    margin-top: -6px;
    flex-shrink: 0;
  }
`;
